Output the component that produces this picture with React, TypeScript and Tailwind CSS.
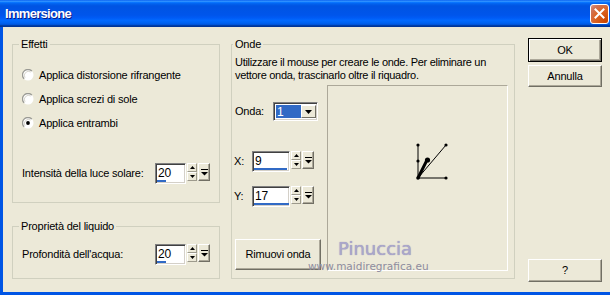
import React from "react";

function Radio({ label, checked }: { label: string; checked?: boolean }) {
  return (
    <div className="h-[24px] flex items-center">
      <svg width="12" height="12" viewBox="0 0 12 12" className="shrink-0">
        <circle cx="6" cy="6" r="5.5" fill="#ffffff" />
        <path d="M2.1 9.9 A5.5 5.5 0 0 1 9.9 2.1" stroke="#9A9A94" strokeWidth="1.3" fill="none" />
        <path d="M3 8.8 A4.2 4.2 0 0 1 8.8 3" stroke="#D8D6CE" strokeWidth="1" fill="none" />
        {checked && <circle cx="6" cy="6" r="1.9" fill="#000" />}
      </svg>
      <span className="ml-[5px] whitespace-nowrap">{label}</span>
    </div>
  );
}

function SpinButtons() {
  return (
    <div className="ml-[1px] w-[10px] h-[18px] flex flex-col">
      <div className="h-[9px] flex items-center justify-center bg-[#ECE9D8] border border-t-white border-l-white border-b-[#9D9A8C] border-r-[#9D9A8C]">
        <svg width="5" height="3" viewBox="0 0 5 3"><path d="M2.5 0 L5 3 L0 3 Z" fill="#000" /></svg>
      </div>
      <div className="h-[9px] flex items-center justify-center bg-[#ECE9D8] border border-t-white border-l-white border-b-[#9D9A8C] border-r-[#9D9A8C]">
        <svg width="5" height="3" viewBox="0 0 5 3"><path d="M0 0 L5 0 L2.5 3 Z" fill="#000" /></svg>
      </div>
    </div>
  );
}

function DropMini() {
  return (
    <div className="ml-[1px] w-[12px] h-[18px] flex items-center justify-center bg-[#ECE9D8] border border-t-white border-l-white border-b-[#716F64] border-r-[#716F64] shadow-[inset_-1px_-1px_0_#ACA899]">
      <svg width="7" height="7" viewBox="0 0 7 7">
        <rect x="0" y="0" width="7" height="1" fill="#000" />
        <path d="M0 3 L7 3 L3.5 6.5 Z" fill="#000" />
      </svg>
    </div>
  );
}

function Spin({ value, boxClass, bar }: { value: string; boxClass: string; bar: number }) {
  return (
    <div className="flex items-start h-[21px]">
      <div
        className={
          "relative h-[21px] bg-white border border-t-[#808080] border-l-[#808080] border-b-white border-r-white shadow-[inset_1px_1px_0_#404040,inset_-1px_-1px_0_#D4D0C8] " +
          boxClass
        }
      >
        <span className="absolute left-[2px] top-[2px] text-[12px] leading-[14px]">{value}</span>
        <div className="absolute left-[1px] bottom-[1px] h-[2px] bg-[#316AC5]" style={{ width: bar }} />
      </div>
      <SpinButtons />
      <DropMini />
    </div>
  );
}

function Btn({ children, cls, def }: { children: React.ReactNode; cls: string; def?: boolean }) {
  return (
    <div
      className={
        "flex items-center justify-center bg-[#ECE9D8] " +
        (def
          ? "border border-black shadow-[inset_1px_1px_0_#fff,inset_-1px_-1px_0_#716F64,inset_-2px_-2px_0_#ACA899] "
          : "border border-t-white border-l-white border-b-[#716F64] border-r-[#716F64] shadow-[inset_-1px_-1px_0_#ACA899] ") +
        cls
      }
    >
      {children}
    </div>
  );
}

export default function App() {
  return (
    <div className="w-[610px] h-[295px] overflow-hidden flex flex-col bg-[#0055E5] font-['Liberation_Sans',Arial,sans-serif] text-[11px] tracking-[-0.2px] text-black">
      {/* Title bar */}
      <div className="h-[27px] shrink-0 flex items-center justify-between pl-[5px] pr-[1px] bg-[linear-gradient(to_bottom,#0058EE_0%,#3593FF_4%,#288EFF_6%,#127DFF_8%,#036FFC_10%,#0262EE_14%,#0057E5_20%,#0054E3_24%,#0055EB_56%,#005BF5_66%,#026AFE_76%,#0062EF_86%,#0052D6_92%,#0040AB_94%,#003092_100%)]">
        <span className="text-white font-bold text-[13px] tracking-[-0.7px] [text-shadow:1px_1px_0_#0A1883]">Immersione</span>
        <div className="w-[19px] h-[20px] rounded-[3px] border border-white flex items-center justify-center bg-[radial-gradient(circle_at_90%_90%,#CC4600_0%,#DC6527_55%,#CD7359_80%,#DC998A_100%)]">
          <svg width="11" height="11" viewBox="0 0 11 11">
            <path d="M1.5 1.5 L9.5 9.5 M9.5 1.5 L1.5 9.5" stroke="#fff" strokeWidth="2" strokeLinecap="square" />
          </svg>
        </div>
      </div>

      {/* Body */}
      <div className="flex-1 ml-[3px] mb-[3px] bg-[#ECE9D8] flex pt-[11px] pl-[9px]">
        {/* Left column */}
        <div className="w-[208px] flex flex-col">
          <fieldset className="h-[165px] border border-[#D0D0BF] pl-[9px] pr-[9px]">
            <legend className="ml-[-3px] px-[2px] leading-[13px]">Effetti</legend>
            <div className="pt-[12px] flex flex-col">
              <Radio label="Applica distorsione rifrangente" />
              <Radio label="Applica screzi di sole" />
              <Radio label="Applica entrambi" checked />
              <div className="mt-[28px] flex items-center">
                <span className="whitespace-nowrap">Intensità della luce solare:</span>
                <div className="ml-auto">
                  <Spin value="20" boxClass="w-[31px]" bar={9} />
                </div>
              </div>
            </div>
          </fieldset>
          <fieldset className="mt-[17px] h-[59px] border border-[#D0D0BF] pl-[9px] pr-[9px]">
            <legend className="ml-[-3px] px-[2px] leading-[13px]">Proprietà del liquido</legend>
            <div className="pt-[11px] flex items-center">
              <span className="whitespace-nowrap">Profondità dell'acqua:</span>
              <div className="ml-auto">
                <Spin value="20" boxClass="w-[31px]" bar={9} />
              </div>
            </div>
          </fieldset>
        </div>

        {/* Onde */}
        <fieldset className="ml-[11px] w-[284px] h-[241px] border border-[#D0D0BF] pl-[3px] pr-[6px]">
          <legend className="ml-[-2px] px-[2px] leading-[13px]">Onde</legend>
          <p className="pt-[5px] leading-[13px] whitespace-nowrap tracking-[-0.3px]">
            Utilizzare il mouse per creare le onde. Per eliminare un
            <br />
            vettore onda, trascinarlo oltre il riquadro.
          </p>
          <div className="mt-[3px] flex">
            <div className="w-[86px] flex flex-col">
              <div className="mt-[17px] h-[19px] flex items-center">
                <span className="w-[38px]">Onda:</span>
                <div className="w-[45px] h-[19px] flex bg-white border border-t-[#808080] border-l-[#808080] border-b-white border-r-white shadow-[inset_1px_1px_0_#404040,inset_-1px_-1px_0_#D4D0C8] p-[2px] pr-[1px]">
                  <div className="flex-1 bg-[#316AC5] text-white text-[12px] leading-[14px] pl-[1px]">1</div>
                  <div className="w-[15px] flex items-center justify-center bg-[#ECE9D8] border border-t-white border-l-white border-b-[#716F64] border-r-[#716F64]">
                    <svg width="7" height="4" viewBox="0 0 7 4"><path d="M0 0 L7 0 L3.5 4 Z" fill="#000" /></svg>
                  </div>
                </div>
              </div>
              <div className="mt-[30px] flex items-center">
                <span className="w-[18px] ml-[-1px]">X:</span>
                <Spin value="9" boxClass="w-[38px]" bar={33} />
              </div>
              <div className="mt-[14px] flex items-center">
                <span className="w-[18px] ml-[-1px]">Y:</span>
                <Spin value="17" boxClass="w-[38px]" bar={35} />
              </div>
              <Btn cls="mt-[32px] h-[31px] w-[86px] text-[11px]">Rimuovi onda</Btn>
            </div>
            <div className="relative ml-[6px] w-[181px] h-[186px] border border-t-[#ACA899] border-l-[#ACA899] border-b-white border-r-white">
              <svg className="absolute left-0 top-0" width="179" height="184" viewBox="0 0 179 184">
                <g transform="translate(-1,-1)">
                  <line x1="91" y1="60" x2="91" y2="93" stroke="#000" strokeWidth="1" />
                  <line x1="91" y1="93" x2="119" y2="93" stroke="#000" strokeWidth="1" />
                  <line x1="91" y1="93" x2="119" y2="60" stroke="#000" strokeWidth="1" />
                  <line x1="91" y1="93" x2="100" y2="75" stroke="#000" strokeWidth="3" />
                  <circle cx="100.5" cy="75" r="2.6" fill="#000" />
                  <circle cx="91" cy="60" r="1.6" fill="#000" />
                  <circle cx="119" cy="60" r="1.6" fill="#000" />
                  <circle cx="91" cy="76" r="1.6" fill="#000" />
                  <circle cx="91" cy="93" r="1.8" fill="#000" />
                  <circle cx="119" cy="93" r="1.6" fill="#000" />
                </g>
              </svg>
              <span className="absolute left-[10px] top-[153px] font-['DejaVu_Sans',sans-serif] text-[18px] leading-[20px] tracking-[0px] text-[#ABA7CB] [text-shadow:0_0_1px_#8C88B0]">
                Pinuccia
              </span>
              <span className="absolute left-[-20px] top-[174px] font-['DejaVu_Sans',sans-serif] text-[10.5px] leading-[12px] tracking-[0px] text-[#8E8C9E]">
                www.maidiregrafica.eu
              </span>
            </div>
          </div>
        </fieldset>

        {/* Right column */}
        <div className="ml-[13px] w-[74px] flex flex-col">
          <Btn def cls="h-[24px] w-[74px]">OK</Btn>
          <Btn cls="mt-[3px] h-[22px] w-[74px]">Annulla</Btn>
          <Btn cls="mt-[172px] h-[23px] w-[74px]">?</Btn>
        </div>
      </div>
    </div>
  );
}
